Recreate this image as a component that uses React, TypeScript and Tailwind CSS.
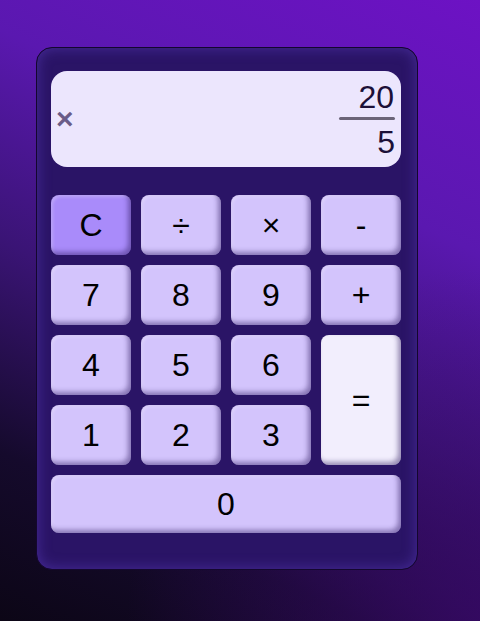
import React from "react";

const keys: { label: string; kind?: "clear" | "equal" | "zero" }[] = [
  { label: "C", kind: "clear" },
  { label: "÷" },
  { label: "×" },
  { label: "-" },
  { label: "7" },
  { label: "8" },
  { label: "9" },
  { label: "+" },
  { label: "4" },
  { label: "5" },
  { label: "6" },
  { label: "=", kind: "equal" },
  { label: "1" },
  { label: "2" },
  { label: "3" },
  { label: "0", kind: "zero" },
];

const App: React.FC = () => {
  return (
    <div className="w-[480px] h-[621px] bg-[linear-gradient(205deg,#6d12c4_0%,#5a18b0_30%,#3a1475_55%,#150a2c_80%,#0c0616_100%)] relative overflow-hidden font-['Liberation_Sans',Arial,sans-serif]">
      {/* лёгкая фиолетовая подсветка справа снизу */}
      <div className="absolute inset-0 bg-[radial-gradient(circle_at_100%_100%,rgba(60,8,110,0.7)_0%,rgba(60,8,110,0)_45%)]" />
      <div className="relative pl-[36px] pt-[47px]">
        <div className="w-[382px] h-[523px] rounded-[16px] border border-[#14072e] bg-[#2a1466] shadow-[inset_0_0_14px_rgba(90,60,190,0.6)] px-[14px] pt-[23px]">
          {/* Дисплей */}
          <div className="w-[350px] h-[96px] rounded-[16px] bg-[#ece6fd] flex items-center justify-between pl-[5px] pr-[6px]">
            <span className="text-[30px] font-bold text-[#6a5c88] leading-none">×</span>
            <div className="flex flex-col items-end text-[#1c1038] text-[32px] leading-none">
              <span className="pr-[1px]">20</span>
              <span className="block w-[56px] h-[3px] bg-[#6b6478] rounded-full mt-[4px] mb-[6px]" />
              <span>5</span>
            </div>
          </div>
          {/* Кнопки */}
          <div className="w-[350px] grid grid-cols-4 gap-[10px] auto-rows-[60px] mt-[28px]">
            {keys.map((k) => (
              <button
                key={k.label}
                className={`rounded-[8px] flex items-center justify-center text-[32px] text-black shadow-[inset_-3px_-3px_5px_rgba(40,20,90,0.45),inset_2px_2px_3px_rgba(255,255,255,0.25)] ${
                  k.kind === "clear"
                    ? "bg-[#a98bfa]"
                    : k.kind === "equal"
                    ? "bg-[#f2eefd] row-span-2"
                    : k.kind === "zero"
                    ? "bg-[#d3c4fc] col-span-4 h-[58px]"
                    : "bg-[#d3c4fc]"
                }`}
              >
                {k.label}
              </button>
            ))}
          </div>
        </div>
      </div>
    </div>
  );
};

export default App;
